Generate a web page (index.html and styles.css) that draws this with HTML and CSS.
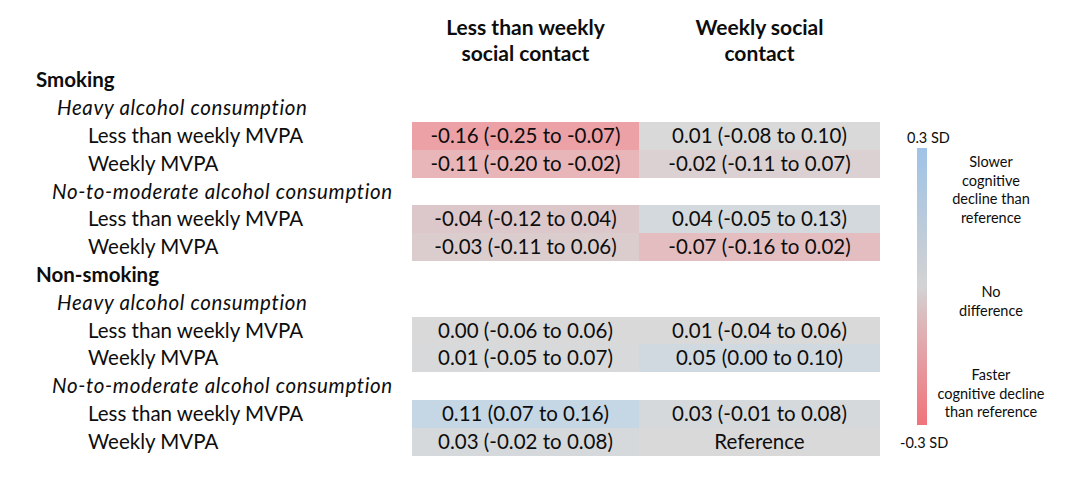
FILE: index.html
```html
<!DOCTYPE html>
<html lang="en">
<head>
<meta charset="utf-8">
<title>Cognitive decline table</title>
<link rel="stylesheet" href="styles.css">
</head>
<body>
<div class="page">
  <div class="table">
    <div class="corner"></div>
    <div class="colhead">Less than weekly<br>social contact</div>
    <div class="colhead">Weekly social<br>contact</div>

    <div class="lvl1 span">Smoking</div>
    <div class="lvl2 span">Heavy alcohol consumption</div>
    <div class="lvl3">Less than weekly MVPA</div>
    <div class="cell t-n16">-0.16 (-0.25 to -0.07)</div>
    <div class="cell t-0">0.01 (-0.08 to 0.10)</div>
    <div class="lvl3">Weekly MVPA</div>
    <div class="cell t-n11">-0.11 (-0.20 to -0.02)</div>
    <div class="cell t-n02">-0.02 (-0.11 to 0.07)</div>
    <div class="lvl2 alt span">No-to-moderate alcohol consumption</div>
    <div class="lvl3">Less than weekly MVPA</div>
    <div class="cell t-n04">-0.04 (-0.12 to 0.04)</div>
    <div class="cell t-p04">0.04 (-0.05 to 0.13)</div>
    <div class="lvl3">Weekly MVPA</div>
    <div class="cell t-n03">-0.03 (-0.11 to 0.06)</div>
    <div class="cell t-n07">-0.07 (-0.16 to 0.02)</div>

    <div class="lvl1 span">Non-smoking</div>
    <div class="lvl2 span">Heavy alcohol consumption</div>
    <div class="lvl3">Less than weekly MVPA</div>
    <div class="cell t-0">0.00 (-0.06 to 0.06)</div>
    <div class="cell t-0">0.01 (-0.04 to 0.06)</div>
    <div class="lvl3">Weekly MVPA</div>
    <div class="cell t-p01">0.01 (-0.05 to 0.07)</div>
    <div class="cell t-p05">0.05 (0.00 to 0.10)</div>
    <div class="lvl2 alt span">No-to-moderate alcohol consumption</div>
    <div class="lvl3">Less than weekly MVPA</div>
    <div class="cell t-p11">0.11 (0.07 to 0.16)</div>
    <div class="cell t-p03">0.03 (-0.01 to 0.08)</div>
    <div class="lvl3">Weekly MVPA</div>
    <div class="cell t-p03">0.03 (-0.02 to 0.08)</div>
    <div class="cell t-0">Reference</div>
  </div>

  <div class="legend">
    <div class="legend-top">0.3 SD</div>
    <div class="legend-body">
      <div class="legend-bar"></div>
      <div class="legend-labels">
        <div class="legend-group g1">Slower<br>cognitive<br>decline than<br>reference</div>
        <div class="legend-group g2">No<br>difference</div>
        <div class="legend-group g3">Faster<br>cognitive decline<br>than reference</div>
      </div>
    </div>
    <div class="legend-bottom">-0.3 SD</div>
  </div>
</div>
</body>
</html>
```

FILE: styles.css
```css
html, body {
  margin: 0;
  padding: 0;
  background: #ffffff;
}

body {
  font-family: Lato, "Open Sans", "Liberation Sans", sans-serif;
  color: #0d0d0d;
}

.page {
  display: flex;
  align-items: flex-start;
  width: 1080px;
  height: 480px;
}

.table {
  display: grid;
  grid-template-columns: 412px 227px 241px;
  grid-template-rows: 66.4px;
  grid-auto-rows: 27.8px;
  font-size: 20.5px;
}

.colhead {
  font-weight: 700;
  font-size: 21px;
  text-align: center;
  line-height: 26px;
  align-self: end;
}

.span {
  grid-column: 1 / -1;
}

.lvl1, .lvl2, .lvl3, .cell {
  line-height: 27.8px;
  white-space: nowrap;
}

.lvl1 {
  font-weight: 700;
  padding-left: 36px;
}

.lvl2 {
  font-style: italic;
  letter-spacing: 0.65px;
  padding-left: 57px;
}

.lvl2.alt {
  padding-left: 52px;
}

.lvl3 {
  padding-left: 88px;
}

.cell {
  text-align: center;
}

.t-n16 { background: #eba1a6; }
.t-n11 { background: #e8b6b9; }
.t-n07 { background: #e4bdc0; }
.t-n04 { background: #dcc8ca; }
.t-n03 { background: #dbcdce; }
.t-n02 { background: #dcd1d2; }
.t-0   { background: #d9d9d9; }
.t-p01 { background: #d8d9da; }
.t-p03 { background: #d6d9db; }
.t-p04 { background: #d3d9dd; }
.t-p05 { background: #d0d9e0; }
.t-p11 { background: #c5d6e4; }

.legend {
  margin-left: 20px;
  margin-top: 129px;
  font-size: 14.5px;
  line-height: 18px;
  display: flex;
  flex-direction: column;
}

.legend-top {
  padding-left: 7px;
  height: 18px;
}

.legend-body {
  display: flex;
  margin-top: 1px;
}

.legend-bar {
  width: 10px;
  height: 277px;
  margin-left: 17px;
  background: linear-gradient(to bottom, #9fc3e7 0%, #c3cdd7 35%, #d3d3d3 50%, #dfb3b6 65%, #f0737a 100%);
}

.legend-labels {
  width: 128px;
  display: flex;
  flex-direction: column;
  text-align: center;
  line-height: 18.5px;
}

.g1 { margin-top: 5px; }
.g2 { margin-top: 56px; }
.g3 { margin-top: 46px; }

.legend-bottom {
  margin-top: 9px;
  height: 18px;
}
```
